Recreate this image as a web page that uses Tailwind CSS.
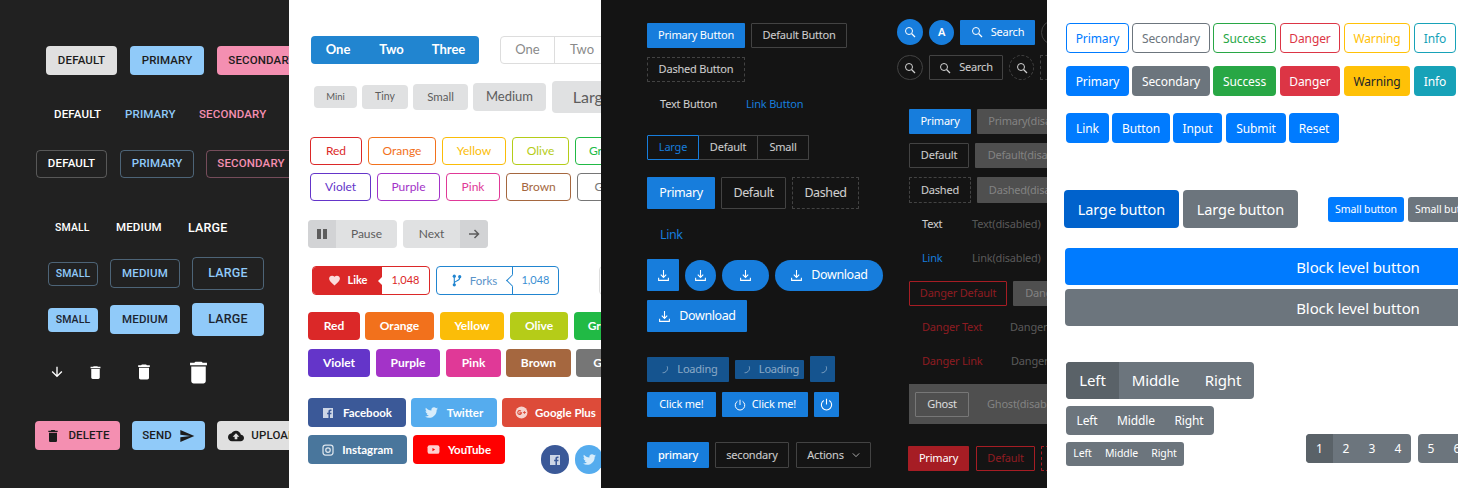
<!DOCTYPE html>
<html lang="en">
<head>
<meta charset="UTF-8">
<title>Button kits</title>
<script src="https://cdn.jsdelivr.net/npm/@tailwindcss/browser@4"></script>
</head>
<body class="m-0 bg-white">
<svg class="hidden" xmlns="http://www.w3.org/2000/svg">
  <symbol id="trash" viewBox="0 0 24 24"><path fill="currentColor" d="M6 19c0 1.100.9 2 2 2h8c1.100 0 2-.9 2-2V7H6v12zM19 4h-3.500l-1-1h-5l-1 1H5v2h14V4z"/></symbol>
  <symbol id="search" viewBox="0 0 24 24"><circle cx="10" cy="10" r="7" fill="none" stroke="currentColor" stroke-width="2"/><path d="M15.500 15.500 22 22" stroke="currentColor" stroke-width="2.400" fill="none"/></symbol>
  <symbol id="download" viewBox="0 0 24 24"><path d="M12 2v13M7 10.500l5 5 5-5M3 16v5h18v-5" stroke="currentColor" stroke-width="2" fill="none"/></symbol>
  <symbol id="spin" viewBox="0 0 24 24"><path d="M20 5a10 10 0 0 1-10 14" stroke="currentColor" stroke-width="1.800" fill="none"/></symbol>
  <symbol id="power" viewBox="0 0 24 24"><path d="M7 4.500a9.500 9.500 0 1 0 10 0M12 1.500V12" stroke="currentColor" stroke-width="2" fill="none"/></symbol>
  <symbol id="twitter" viewBox="0 0 24 24"><path fill="currentColor" d="M23.953 4.570a10 10 0 01-2.825.775 4.958 4.958 0 002.163-2.723c-.951.555-2.005.959-3.127 1.184a4.920 4.920 0 00-8.384 4.482C7.690 8.095 4.067 6.130 1.640 3.162a4.822 4.822 0 00-.666 2.475c0 1.710.870 3.213 2.188 4.096a4.904 4.904 0 01-2.228-.616v.060a4.923 4.923 0 003.946 4.827 4.996 4.996 0 01-2.212.085 4.936 4.936 0 004.604 3.417 9.867 9.867 0 01-6.102 2.105c-.390 0-.779-.023-1.170-.067a13.995 13.995 0 007.557 2.209c9.053 0 13.998-7.496 13.998-13.985 0-.210 0-.420-.015-.630A9.935 9.935 0 0024 4.590z"/></symbol>
  <symbol id="fb" viewBox="0 0 24 24"><path fill="currentColor" fill-rule="evenodd" d="M2 2h20v20h-6v-7.500h2.700l.4-3.100H16V9.300c0-.9.300-1.500 1.500-1.500H19V5.100c-.3 0-1.200-.1-2.300-.1-2.300 0-3.800 1.400-3.800 3.900v2.500h-2.700v3.100h2.700V22H2z"/></symbol>
</svg>

<div class="flex w-[1458px] h-[488px] overflow-hidden">

  <!-- material -->
  <section class="w-[289px] h-full shrink-0 overflow-hidden bg-[#212121] pt-[46px] font-['Roboto',sans-serif] font-medium text-[11.500px] tracking-[.15px]">
    <div class="flex w-max gap-[13px] ml-[46px] h-[29px] text-[#1c1c1c]">
      <button class="w-[71px] rounded bg-[#e0e0e0]">DEFAULT</button>
      <button class="w-[74px] rounded bg-[#90caf9]">PRIMARY</button>
      <button class="w-[90px] rounded bg-[#f48fb1]">SECONDARY</button>
    </div>
    <div class="flex w-max items-center ml-[54px] mt-[28px] h-[24px]">
      <span class="text-white w-[71px]">DEFAULT</span>
      <span class="text-[#90caf9] w-[74px]">PRIMARY</span>
      <span class="text-[#f48fb1]">SECONDARY</span>
    </div>
    <div class="flex w-max ml-[36px] mt-[23px] h-[28px]">
      <button class="w-[71px] rounded border border-white/25 text-white">DEFAULT</button>
      <button class="w-[74px] ml-[13px] rounded border border-[#90caf9]/40 text-[#90caf9]">PRIMARY</button>
      <button class="w-[90px] ml-[12px] rounded border border-[#f48fb1]/40 text-[#f48fb1]">SECONDARY</button>
    </div>
    <div class="flex w-max items-center ml-[55px] mt-[38px] h-[24px] text-white">
      <span class="text-[10.500px] w-[61px]">SMALL</span>
      <span class="w-[72px]">MEDIUM</span>
      <span class="text-[12.500px]">LARGE</span>
    </div>
    <div class="flex w-max items-center gap-[12px] ml-[48px] mt-[17px] h-[33px] text-[#90caf9]">
      <button class="w-[50px] h-[24px] rounded border border-[#90caf9]/40 text-[10.500px]">SMALL</button>
      <button class="w-[70px] h-[29px] rounded border border-[#90caf9]/40">MEDIUM</button>
      <button class="w-[72px] h-[33px] rounded border border-[#90caf9]/40 text-[12.500px]">LARGE</button>
    </div>
    <div class="flex w-max items-center gap-[12px] ml-[48px] mt-[13px] h-[33px] text-[#1c2430]">
      <button class="w-[50px] h-[24px] rounded bg-[#90caf9] text-[10.500px]">SMALL</button>
      <button class="w-[70px] h-[29px] rounded bg-[#90caf9]">MEDIUM</button>
      <button class="w-[72px] h-[33px] rounded bg-[#90caf9] text-[12.500px]">LARGE</button>
    </div>
    <div class="flex w-max items-center ml-[49px] mt-[24px] h-[24px] text-white">
      <svg class="w-[16px] h-[16px]" viewBox="0 0 24 24"><path fill="currentColor" d="M20 12l-1.410-1.410L13 16.170V4h-2v12.170l-5.580-5.590L4 12l8 8 8-8z"/></svg>
      <svg class="w-[17px] h-[17px] ml-[22px]"><use href="#trash"/></svg>
      <svg class="w-[20px] h-[20px] ml-[30px]"><use href="#trash"/></svg>
      <svg class="w-[29px] h-[29px] ml-[30px]"><use href="#trash"/></svg>
    </div>
    <div class="flex w-max gap-[12px] ml-[35px] mt-[37px] h-[29px] text-[#1c1c1c]">
      <button class="w-[85px] rounded bg-[#f48fb1] flex items-center justify-center gap-[7px]"><svg class="w-[16px] h-[16px]"><use href="#trash"/></svg>DELETE</button>
      <button class="w-[73px] rounded bg-[#90caf9] flex items-center justify-center gap-[7px]">SEND<svg class="w-[16px] h-[16px]" viewBox="0 0 24 24"><path fill="currentColor" d="M2.010 21L23 12 2.010 3 2 10l15 2-15 2z"/></svg></button>
      <button class="w-[90px] rounded bg-[#e0e0e0] flex items-center justify-center gap-[7px]"><svg class="w-[16px] h-[16px]" viewBox="0 0 24 24"><path fill="currentColor" d="M19.350 10.040C18.670 6.590 15.640 4 12 4 9.110 4 6.600 5.640 5.350 8.040 2.340 8.360 0 10.910 0 14c0 3.310 2.690 6 6 6h13c2.760 0 5-2.240 5-5 0-2.640-2.050-4.780-4.650-4.960zM14 13v4h-4v-4H7l5-5 5 5h-3z"/></svg>UPLOAD</button>
    </div>
  </section>

  <!-- semantic -->
  <section class="w-[312px] h-full shrink-0 overflow-hidden bg-white pt-[36px] font-['Lato',sans-serif] text-[12px]">
    <div class="flex w-max ml-[22px] h-[28px]">
      <div class="flex w-[168px] rounded bg-[#2185d0] text-white font-bold text-[13px]">
        <button class="w-[54px]">One</button><button class="w-[53px]">Two</button><button class="w-[61px]">Three</button>
      </div>
      <div class="flex ml-[21px] rounded border border-[#ddd] text-[#8a8a8a] text-[13px]">
        <button class="w-[54px] border-r border-[#ddd]">One</button><button class="w-[54px]">Two</button>
      </div>
    </div>
    <div class="flex w-max items-center ml-[25px] mt-[17px] h-[32px] gap-[5px] bg-white text-[#5d5d5d]">
      <button class="w-[43px] h-[22px] rounded bg-[#e0e1e2] text-[9.500px]">Mini</button>
      <button class="w-[46px] h-[24px] rounded bg-[#e0e1e2] text-[10.500px]">Tiny</button>
      <button class="w-[55px] h-[26px] rounded bg-[#e0e1e2] text-[11.500px]">Small</button>
      <button class="w-[73px] h-[28px] rounded bg-[#e0e1e2] text-[13px]">Medium</button>
      <button class="w-[80px] h-[32px] rounded bg-[#e0e1e2] text-[16px] ml-[1px]">Large</button>
    </div>
    <div class="flex w-max ml-[21px] mt-[24px] h-[28px] gap-[6px]">
      <button class="w-[52px] rounded border border-[#db2828] text-[#db2828]">Red</button>
      <button class="w-[68px] rounded border border-[#f2711c] text-[#f2711c]">Orange</button>
      <button class="w-[64px] rounded border border-[#fbbd08] text-[#fbbd08]">Yellow</button>
      <button class="w-[57px] rounded border border-[#b5cc18] text-[#b5cc18]">Olive</button>
      <button class="w-[60px] rounded border border-[#21ba45] text-[#21ba45]">Green</button>
    </div>
    <div class="flex w-max ml-[21px] mt-[8px] h-[28px] gap-[6px]">
      <button class="w-[61px] rounded border border-[#6435c9] text-[#6435c9]">Violet</button>
      <button class="w-[63px] rounded border border-[#a333c8] text-[#a333c8]">Purple</button>
      <button class="w-[54px] rounded border border-[#e03997] text-[#e03997]">Pink</button>
      <button class="w-[65px] rounded border border-[#a5673f] text-[#a5673f]">Brown</button>
      <button class="w-[60px] rounded border border-[#767676] text-[#767676]">Grey</button>
    </div>
    <div class="flex w-max ml-[19px] mt-[19px] h-[28px] gap-[6px] text-[#5d5d5d] text-[12px]">
      <button class="flex w-[89px] rounded bg-[#e0e1e2] overflow-hidden">
        <span class="w-[28px] h-full bg-[#d2d3d5] flex items-center justify-center gap-[2px]"><i class="w-[4px] h-[10px] bg-[#5d5d5d]"></i><i class="w-[4px] h-[10px] bg-[#5d5d5d]"></i></span>
        <span class="flex-1 h-full flex items-center justify-center">Pause</span>
      </button>
      <button class="flex w-[85px] rounded bg-[#e0e1e2] overflow-hidden">
        <span class="flex-1 h-full flex items-center justify-center">Next</span>
        <span class="w-[28px] h-full bg-[#d2d3d5] flex items-center justify-center"><svg class="w-[12px] h-[12px]" viewBox="0 0 24 24"><path d="M2 12h19M13 4l8 8-8 8" stroke="currentColor" stroke-width="3" fill="none"/></svg></span>
      </button>
    </div>
    <div class="flex w-max ml-[23px] mt-[18px] h-[29px] text-[11px]">
      <button class="flex w-[118px] rounded overflow-hidden border border-[#db2828]">
        <span class="relative w-[69px] h-full bg-[#db2828] text-white font-bold text-[11px] flex items-center justify-center gap-[7px]"><svg class="w-[13px] h-[13px]" viewBox="0 0 24 24"><path fill="#fbdcdc" d="M12 21.350l-1.450-1.320C5.400 15.360 2 12.280 2 8.500 2 5.420 4.420 3 7.500 3c1.740 0 3.410.81 4.500 2.090C13.090 3.810 14.760 3 16.500 3 19.580 3 22 5.420 22 8.500c0 3.780-3.400 6.860-8.550 11.540L12 21.350z"/></svg>Like<i class="absolute right-0 top-[10px] w-0 h-0 border-y-[4px] border-y-transparent border-r-[4px] border-r-white"></i></span>
        <span class="flex-1 h-full flex items-center justify-center text-[#db2828]">1,048</span>
      </button>
      <button class="flex w-[123px] ml-[6px] rounded border border-[#2185d0] text-[#3b8fd3]">
        <span class="w-[75px] h-full flex items-center justify-center gap-[8px] text-[11.500px] text-[#5a93c9]"><svg class="w-[10px] h-[13px] text-[#2185d0]" viewBox="0 0 18 24"><path d="M4 5v14M4 17c0-5 10-3 10-10" stroke="currentColor" stroke-width="2" fill="none"/><circle cx="4" cy="4" r="3" fill="currentColor"/><circle cx="4" cy="20" r="3" fill="currentColor"/><circle cx="14" cy="5" r="3" fill="currentColor"/></svg>Forks</span>
        <span class="relative flex-1 h-full flex items-center justify-center border-l border-[#2185d0]"><i class="absolute left-[-5px] top-[9px] w-[9px] h-[9px] bg-white border-l border-b border-[#2185d0] rotate-45"></i>1,048</span>
      </button>
      <span class="w-[30px] ml-[40px] rounded border border-[#ddd]"></span>
    </div>
    <div class="flex w-max ml-[19px] mt-[17px] h-[28px] gap-[5px] text-white font-bold text-[12px]">
      <button class="w-[52px] rounded bg-[#db2828]">Red</button>
      <button class="w-[69px] rounded bg-[#f2711c]">Orange</button>
      <button class="w-[64px] ml-[1px] rounded bg-[#fbbd08]">Yellow</button>
      <button class="w-[58px] ml-[1px] rounded bg-[#b5cc18]">Olive</button>
      <button class="w-[60px] ml-[1px] rounded bg-[#21ba45]">Green</button>
    </div>
    <div class="flex w-max ml-[19px] mt-[9px] h-[28px] gap-[6px] text-white font-bold text-[12px]">
      <button class="w-[62px] rounded bg-[#6435c9]">Violet</button>
      <button class="w-[64px] rounded bg-[#a333c8]">Purple</button>
      <button class="w-[55px] rounded bg-[#e03997]">Pink</button>
      <button class="w-[65px] -ml-[1px] rounded bg-[#a5673f]">Brown</button>
      <button class="w-[60px] -ml-[1px] rounded bg-[#767676]">Grey</button>
    </div>
    <div class="flex w-max ml-[19px] mt-[21px] h-[29px] gap-[5px] text-white font-bold text-[11.500px]">
      <button class="w-[98px] rounded bg-[#3b5998] flex items-center justify-center gap-[9px]"><svg class="w-[12px] h-[12px] text-[#cdd6e6]"><use href="#fb"/></svg>Facebook</button>
      <button class="w-[86px] rounded bg-[#55acee] flex items-center justify-center gap-[9px]"><svg class="w-[13px] h-[13px] text-[#d8edfb]"><use href="#twitter"/></svg>Twitter</button>
      <button class="w-[107px] rounded bg-[#dd4b39] flex items-center justify-center gap-[7px]"><svg class="w-[13px] h-[13px]" viewBox="0 0 24 24"><circle cx="12" cy="12" r="11" fill="#f6d3ce"/><path d="M11 9.500a3.500 3.500 0 1 0 1 3.200H8M15 12h5M17.500 9.500v5" stroke="#dd4b39" stroke-width="2" fill="none"/></svg>Google Plus</button>
    </div>
    <div class="flex w-max items-start ml-[19px] mt-[8px] text-white font-bold text-[11.500px]">
      <button class="w-[99px] h-[29px] rounded bg-[#49769c] flex items-center justify-center gap-[8px]"><svg class="w-[12px] h-[12px]" viewBox="0 0 24 24"><rect x="2" y="2" width="20" height="20" rx="5" fill="none" stroke="#dbe4ec" stroke-width="2.500"/><circle cx="12" cy="12" r="4.500" fill="none" stroke="#dbe4ec" stroke-width="2.500"/></svg>Instagram</button>
      <button class="w-[92px] h-[29px] ml-[6px] rounded bg-[#ff0000] flex items-center justify-center gap-[8px]"><svg class="w-[13px] h-[13px]" viewBox="0 0 24 24"><rect x="1" y="4" width="22" height="16" rx="4" fill="#ffd0d0"/><path d="M10 9v6l5-3z" fill="#ff0000"/></svg>YouTube</button>
      <span class="w-[28px] h-[29px] ml-[36px] mt-[10px] rounded-full bg-[#3b5998] flex items-center justify-center"><svg class="w-[12px] h-[12px] text-[#cdd6e6]"><use href="#fb"/></svg></span>
      <span class="w-[28px] h-[29px] ml-[6px] mt-[10px] rounded-full bg-[#55acee] flex items-center justify-center"><svg class="w-[13px] h-[13px] text-[#d8edfb]"><use href="#twitter"/></svg></span>
    </div>
  </section>

  <!-- ant dark -->
  <section class="flex w-[446px] h-full shrink-0 overflow-hidden bg-[#141414] font-['Noto_Sans',sans-serif] text-[11px] tracking-[-.2px] text-white/80">
    <div class="w-[296px] shrink-0 pl-[46px] pt-[23px]">
      <div class="flex w-max gap-[6px] h-[25px]">
        <button class="w-[98px] rounded-[1px] bg-[#177ddc] text-white">Primary Button</button>
        <button class="w-[96px] rounded-[1px] border border-[#434343]">Default Button</button>
      </div>
      <button class="block w-[98px] h-[25px] mt-[9px] rounded-[1px] border border-dashed border-[#434343]">Dashed Button</button>
      <div class="flex w-max items-center h-[25px] mt-[10px] pl-[13px]">
        <span class="w-[86px]">Text Button</span><span class="text-[#177ddc]">Link Button</span>
      </div>
      <div class="flex w-max h-[25px] mt-[18px]">
        <button class="w-[52px] rounded-l-[1px] border border-[#177ddc] text-[#177ddc]">Large</button>
        <button class="w-[59px] border-y border-r border-[#434343]">Default</button>
        <button class="w-[51px] rounded-r-[1px] border-y border-r border-[#434343]">Small</button>
      </div>
      <div class="flex w-max gap-[6px] h-[32px] mt-[17px] text-[12.500px] tracking-[-.4px]">
        <button class="w-[68px] rounded-[1px] bg-[#177ddc] text-white">Primary</button>
        <button class="w-[65px] rounded-[1px] border border-[#434343]">Default</button>
        <button class="w-[67px] rounded-[1px] border border-dashed border-[#434343]">Dashed</button>
      </div>
      <div class="flex items-center h-[32px] mt-[10px] pl-[13px] text-[12.500px] tracking-[-.4px] text-[#177ddc]">Link</div>
      <div class="flex w-max items-center gap-[6px] h-[32px] mt-[8px] text-white text-[12.500px] tracking-[-.4px]">
        <button class="flex items-center justify-center w-[32px] h-[32px] rounded-[1px] bg-[#177ddc]"><svg class="w-[13px] h-[13px]"><use href="#download"/></svg></button>
        <button class="flex items-center justify-center w-[31px] h-[31px] rounded-full bg-[#177ddc]"><svg class="w-[13px] h-[13px]"><use href="#download"/></svg></button>
        <button class="flex items-center justify-center w-[47px] h-[31px] rounded-full bg-[#177ddc]"><svg class="w-[13px] h-[13px]"><use href="#download"/></svg></button>
        <button class="flex items-center justify-center gap-[8px] w-[108px] h-[31px] rounded-full bg-[#177ddc]"><svg class="w-[13px] h-[13px]"><use href="#download"/></svg>Download</button>
      </div>
      <button class="flex items-center justify-center gap-[8px] w-[100px] h-[32px] mt-[9px] rounded-[1px] bg-[#177ddc] text-white text-[12.500px] tracking-[-.4px]"><svg class="w-[13px] h-[13px]"><use href="#download"/></svg>Download</button>
      <div class="flex w-max items-center gap-[6px] h-[26px] mt-[24px] text-white/50">
        <button class="flex items-center justify-center gap-[8px] w-[82px] h-[25px] rounded-[1px] bg-[#15548f]"><svg class="w-[11px] h-[11px]"><use href="#spin"/></svg>Loading</button>
        <button class="flex items-center justify-center gap-[8px] w-[69px] h-[19px] rounded-[1px] bg-[#15548f]"><svg class="w-[11px] h-[11px]"><use href="#spin"/></svg>Loading</button>
        <button class="flex items-center justify-center w-[25px] h-[26px] rounded-[1px] bg-[#15548f]"><svg class="w-[11px] h-[11px]"><use href="#spin"/></svg></button>
      </div>
      <div class="flex w-max gap-[6px] h-[25px] mt-[10px] text-white">
        <button class="w-[69px] rounded-[1px] bg-[#177ddc]">Click me!</button>
        <button class="flex items-center justify-center gap-[6px] w-[86px] rounded-[1px] bg-[#177ddc]"><svg class="w-[12px] h-[12px]"><use href="#power"/></svg>Click me!</button>
        <button class="flex items-center justify-center w-[25px] rounded-[1px] bg-[#177ddc]"><svg class="w-[13px] h-[13px]"><use href="#power"/></svg></button>
      </div>
      <div class="flex w-max gap-[6px] h-[26px] mt-[25px]">
        <button class="w-[62px] rounded-[1px] bg-[#177ddc] text-white font-medium">primary</button>
        <button class="w-[74px] rounded-[1px] border border-[#434343]">secondary</button>
        <button class="flex items-center justify-center gap-[8px] w-[75px] ml-[1px] rounded-[1px] border border-[#434343]">Actions<svg class="w-[8px] h-[8px]" viewBox="0 0 10 10"><path d="M1 3l4 4 4-4" stroke="currentColor" fill="none"/></svg></button>
      </div>
    </div>
    <div class="flex-1 pt-[19px]">
      <div class="flex w-max items-center gap-[6px] h-[26px] text-white">
        <button class="flex items-center justify-center w-[26px] h-[26px] rounded-full bg-[#177ddc]"><svg class="w-[12px] h-[12px]"><use href="#search"/></svg></button>
        <button class="w-[25px] h-[25px] rounded-full bg-[#177ddc] font-semibold">A</button>
        <button class="flex items-center justify-center gap-[8px] w-[75px] h-[25px] rounded-[1px] bg-[#177ddc]"><svg class="w-[12px] h-[12px]"><use href="#search"/></svg>Search</button>
        <span class="w-[25px] h-[25px] rounded-full border border-[#434343]"></span>
      </div>
      <div class="flex w-max items-center gap-[6px] h-[25px] mt-[10px]">
        <button class="flex items-center justify-center w-[26px] h-[25px] rounded-full border border-[#434343]"><svg class="w-[12px] h-[12px]"><use href="#search"/></svg></button>
        <button class="flex items-center justify-center gap-[8px] w-[74px] h-[25px] rounded-[1px] border border-[#434343]"><svg class="w-[12px] h-[12px]"><use href="#search"/></svg>Search</button>
        <button class="flex items-center justify-center w-[25px] h-[25px] rounded-full border border-dashed border-[#434343]"><svg class="w-[12px] h-[12px]"><use href="#search"/></svg></button>
        <span class="w-[40px] h-[25px] rounded-[1px] border border-dashed border-[#434343]"></span>
      </div>
      <div class="ml-[12px] mt-[29px]">
        <div class="flex w-max gap-[6px] h-[25px]">
          <button class="w-[62px] rounded-[1px] bg-[#177ddc] text-white">Primary</button>
          <button class="w-[110px] rounded-[1px] bg-[#4f4f4f] text-white/30">Primary(disabled)</button>
        </div>
        <div class="flex w-max gap-[6px] h-[25px] mt-[9px]">
          <button class="w-[60px] rounded-[1px] border border-[#434343]">Default</button>
          <button class="w-[110px] rounded-[1px] bg-[#4f4f4f] text-white/30">Default(disabled)</button>
        </div>
        <div class="flex w-max gap-[6px] h-[26px] mt-[9px]">
          <button class="w-[62px] rounded-[1px] border border-dashed border-[#434343]">Dashed</button>
          <button class="w-[110px] rounded-[1px] bg-[#4f4f4f] text-white/30">Dashed(disabled)</button>
        </div>
        <div class="flex w-max items-center h-[25px] mt-[9px] pl-[13px]">
          <span class="w-[50px]">Text</span><span class="text-white/30">Text(disabled)</span>
        </div>
        <div class="flex w-max items-center h-[25px] mt-[9px] pl-[13px]">
          <span class="w-[50px] text-[#177ddc]">Link</span><span class="text-white/30">Link(disabled)</span>
        </div>
        <div class="flex w-max gap-[6px] h-[25px] mt-[10px]">
          <button class="w-[98px] rounded-[1px] border border-[#a61d24] text-[#8f1c22]">Danger Default</button>
          <button class="w-[110px] rounded-[1px] bg-[#4f4f4f] text-white/30">Danger(disabled)</button>
        </div>
        <div class="flex w-max items-center h-[25px] mt-[9px] pl-[13px] text-[#8f1c22]">
          <span class="w-[88px]">Danger Text</span><span class="text-white/30">Danger Text(disabled)</span>
        </div>
        <div class="flex w-max items-center h-[25px] mt-[9px] pl-[13px] text-[#8f1c22]">
          <span class="w-[89px]">Danger Link</span><span class="text-white/30">Danger Link(disabled)</span>
        </div>
        <div class="flex items-center w-[200px] h-[40px] mt-[10px] pl-[6px] bg-[#4f4f4f]">
          <button class="w-[54px] h-[25px] rounded-[1px] border border-[#777]">Ghost</button>
          <span class="ml-[18px] text-white/30 whitespace-nowrap">Ghost(disabled)</span>
        </div>
        <div class="flex w-max h-[25px] mt-[22px] -ml-[1px] text-[#8f1c22]">
          <button class="w-[61px] rounded-[1px] bg-[#a61d24] text-white">Primary</button>
          <button class="w-[59px] ml-[7px] rounded-[1px] border border-[#a61d24]">Default</button>
          <button class="w-[60px] ml-[6px] rounded-[1px] border border-dashed border-[#a61d24]">Dashed</button>
        </div>
      </div>
    </div>
  </section>

  <!-- bootstrap -->
  <section class="w-[411px] h-full shrink-0 overflow-hidden bg-white pt-[23px] font-['Noto_Sans',sans-serif] text-[12px] tracking-[-.1px]">
    <div class="flex w-max ml-[19px] h-[30px] [&>button]:pt-[1px]">
      <button class="w-[63px] rounded border border-[#007bff] text-[#007bff]">Primary</button>
      <button class="w-[78px] ml-[3px] rounded border border-[#6c757d] text-[#6c757d]">Secondary</button>
      <button class="w-[63px] ml-[3px] rounded border border-[#28a745] text-[#28a745]">Success</button>
      <button class="w-[60px] ml-[4px] rounded border border-[#dc3545] text-[#dc3545]">Danger</button>
      <button class="w-[66px] ml-[4px] rounded border border-[#ffc107] text-[#ffc107]">Warning</button>
      <button class="w-[42px] ml-[4px] rounded border border-[#17a2b8] text-[#17a2b8]">Info</button>
    </div>
    <div class="flex w-max ml-[19px] mt-[13px] h-[30px] text-white [&>button]:pt-[2px]">
      <button class="w-[63px] rounded bg-[#007bff]">Primary</button>
      <button class="w-[78px] ml-[3px] rounded bg-[#6c757d]">Secondary</button>
      <button class="w-[63px] ml-[3px] rounded bg-[#28a745]">Success</button>
      <button class="w-[60px] ml-[4px] rounded bg-[#dc3545]">Danger</button>
      <button class="w-[66px] ml-[4px] rounded bg-[#ffc107] text-[#212529]">Warning</button>
      <button class="w-[42px] ml-[4px] rounded bg-[#17a2b8]">Info</button>
    </div>
    <div class="flex w-max ml-[19px] mt-[17px] h-[30px] text-white [&>button]:pt-[2px]">
      <button class="w-[43px] rounded bg-[#007bff]">Link</button>
      <button class="w-[58px] ml-[3px] rounded bg-[#007bff]">Button</button>
      <button class="w-[49px] ml-[3px] rounded bg-[#007bff]">Input</button>
      <button class="w-[60px] ml-[4px] rounded bg-[#007bff]">Submit</button>
      <button class="w-[50px] ml-[3px] rounded bg-[#007bff]">Reset</button>
    </div>
    <div class="flex w-max items-center ml-[17px] mt-[47px] h-[38px] text-white text-[14.500px]">
      <button class="w-[115px] h-[38px] pt-[2px] rounded bg-[#0062cc]">Large button</button>
      <button class="w-[115px] h-[38px] pt-[2px] ml-[4px] rounded bg-[#6c757d]">Large button</button>
      <button class="w-[76px] h-[25px] pt-[1px] ml-[30px] rounded-[3px] bg-[#007bff] text-[10.500px]">Small button</button>
      <button class="w-[76px] h-[25px] pt-[1px] ml-[4px] rounded-[3px] bg-[#6c757d] text-[10.500px]">Small button</button>
    </div>
    <button class="block w-[586px] h-[37px] pt-[2px] ml-[18px] mt-[20px] rounded bg-[#007bff] text-white text-[15px]">Block level button</button>
    <button class="block w-[586px] h-[37px] pt-[2px] ml-[18px] mt-[4px] rounded bg-[#6c757d] text-white text-[15px]">Block level button</button>
    <div class="flex w-max ml-[19px] mt-[36px] text-white">
      <div class="w-[188px] flex flex-col gap-[7px]">
        <div class="flex w-[188px] h-[37px] rounded bg-[#6c757d] overflow-hidden text-[15px]">
          <button class="w-[53px] bg-[#5a6268]">Left</button><button class="w-[73px]">Middle</button><button class="w-[62px]">Right</button>
        </div>
        <div class="flex w-[148px] h-[29px] rounded bg-[#6c757d] overflow-hidden">
          <button class="w-[42px]">Left</button><button class="w-[56px]">Middle</button><button class="w-[50px]">Right</button>
        </div>
        <div class="flex w-[118px] h-[24px] rounded-[3px] bg-[#6c757d] overflow-hidden text-[10.500px]">
          <button class="w-[33px]">Left</button><button class="w-[45px]">Middle</button><button class="w-[40px]">Right</button>
        </div>
      </div>
      <div class="flex self-end mb-[3px] ml-[52px] h-[29px]">
        <div class="flex w-[105px] rounded bg-[#6c757d] overflow-hidden">
          <button class="w-[27px] bg-[#5a6268]">1</button><button class="w-[26px]">2</button><button class="w-[26px]">3</button><button class="w-[26px]">4</button>
        </div>
        <div class="flex w-[60px] ml-[7px] rounded bg-[#6c757d] overflow-hidden">
          <button class="w-[26px]">5</button><button class="w-[26px]">6</button>
        </div>
      </div>
    </div>
  </section>
</div>
</body>
</html>
